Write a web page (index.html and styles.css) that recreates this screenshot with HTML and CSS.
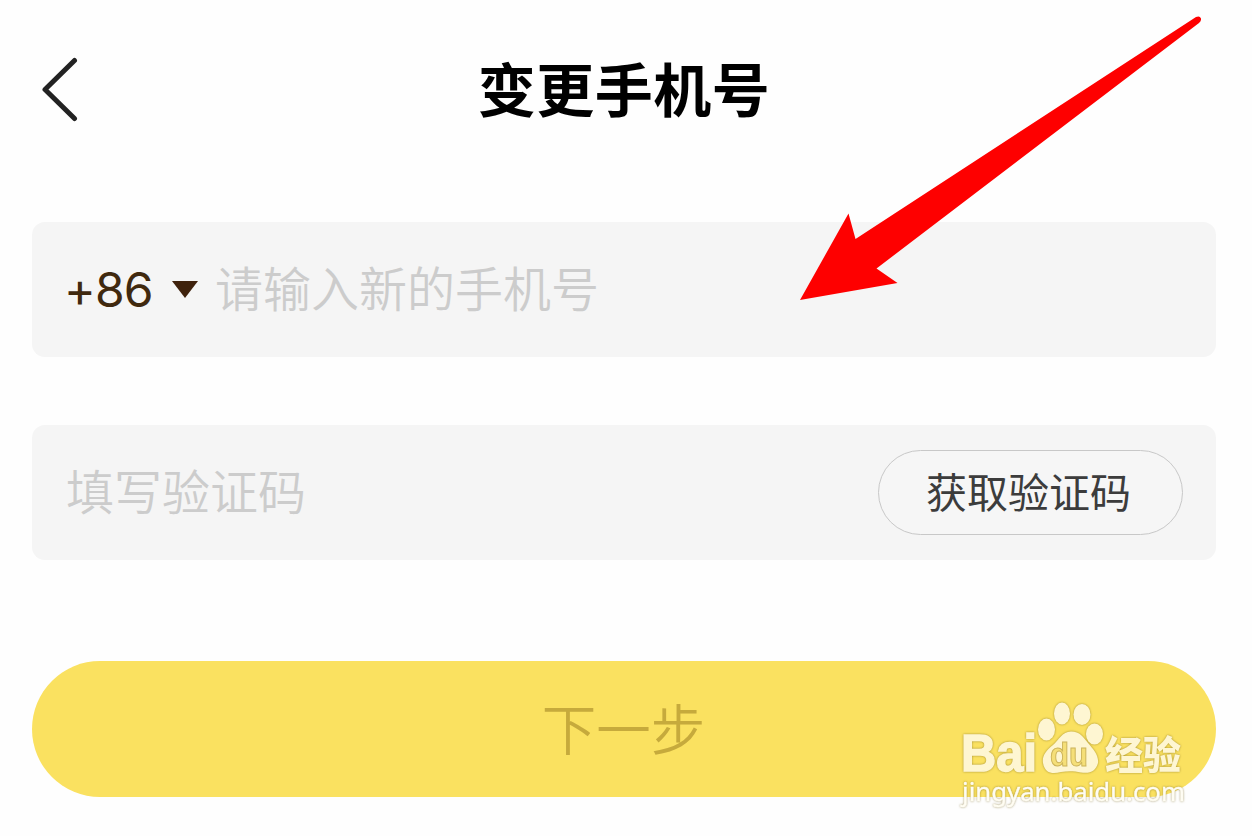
FILE: index.html
```html
<!DOCTYPE html>
<html lang="zh-CN">
<head>
  <meta charset="UTF-8" />
  <meta name="viewport" content="width=device-width, initial-scale=1.0" />
  <title>变更手机号</title>
  <link rel="stylesheet" href="styles.css">
</head>
<body>

  <header class="header">
    <svg class="back" width="40" height="66" viewBox="0 0 40 66">
      <path d="M34.500 3.500L5 32.500l29.500 29" />
    </svg>
    <h1 class="title">变更手机号</h1>
  </header>

  <main class="form">
    <div class="field">
      <span class="prefix">+86</span>
      <svg class="caret" width="26" height="17" viewBox="0 0 26 17">
        <path d="M0 0h26L13 17z" />
      </svg>
      <span class="placeholder">请输入新的手机号</span>
    </div>

    <div class="field">
      <span class="placeholder">填写验证码</span>
      <button class="get-code">获取验证码</button>
    </div>

    <button class="next">下一步</button>
  </main>

  <svg class="arrow" width="410" height="290" viewBox="0 0 410 290">
    <path d="M0 285L48.500 198.500L55.500 224L396 2Q400 0.500 401 3.500Q401.500 6 399 8L76.500 253.500L97.500 268Z" />
  </svg>

  <svg class="watermark" width="240" height="116" viewBox="950 700 240 116">
    <g class="logo">
      <text class="bai" x="961" y="771" textLength="76" lengthAdjust="spacingAndGlyphs">Bai</text>
      <ellipse cx="1046.500" cy="729.500" rx="8.500" ry="11" />
      <ellipse cx="1062" cy="713.500" rx="8" ry="11" />
      <ellipse cx="1082" cy="714.500" rx="8.500" ry="10.500" />
      <ellipse cx="1094.500" cy="734" rx="8.500" ry="10.500" />
      <path d="M1071 731.500C1062 731.500 1059 740 1053 745C1045 751 1042 757 1043 763C1045 774 1053 774 1061 772C1068 771 1074 771 1081 772.500C1090 774 1096 771 1098 763C1099 755 1093 749 1088 743C1083 737 1080 731.500 1071 731.500Z" />
      <text class="jingyan" x="1105" y="769" textLength="76" lengthAdjust="spacingAndGlyphs">经验</text>
    </g>
    <text class="du" x="1050" y="766" textLength="38" lengthAdjust="spacingAndGlyphs">du</text>
    <text class="url" x="962" y="801" textLength="223" lengthAdjust="spacingAndGlyphs">jingyan.baidu.com</text>
  </svg>

</body>
</html>
```
FILE: styles.css
```css
html, body {
  margin: 0;
  padding: 0;
  height: 100%;
  overflow: hidden;
  background: #fefefe;
  font-family: "Liberation Sans", "Noto Sans CJK SC", sans-serif;
}

.header {
  display: grid;
  grid-template-columns: 80px 1fr 80px;
  align-items: center;
  height: 178px;
  padding: 2px 44px 0 40px;
  box-sizing: border-box;
}

.back {
  fill: none;
  stroke: #222;
  stroke-width: 5;
  stroke-linecap: round;
  stroke-linejoin: round;
}

.title {
  margin: 0;
  padding-bottom: 7px;
  text-align: center;
  font-family: "Noto Sans CJK SC", sans-serif;
  font-size: 58px;
  font-weight: 700;
  letter-spacing: 0.5px;
  line-height: 80px;
  color: #000;
}

.form {
  display: flex;
  flex-direction: column;
  padding: 44px 36px 0 32px;
}

.field {
  display: flex;
  align-items: center;
  height: 135px;
  margin-bottom: 68px;
  padding: 0 33px 0 34px;
  box-sizing: border-box;
  border-radius: 13px;
  background: #f5f5f5;
}

.prefix {
  width: 108px;
  margin-left: -2px;
  font-family: Inter, sans-serif;
  font-size: 48px;
  letter-spacing: -0.8px;
  color: #40290f;
}

.caret {
  margin-right: 17px;
  fill: #3f220c;
}

.placeholder {
  padding-bottom: 7px;
  font-family: "Noto Sans CJK SC", sans-serif;
  font-size: 48px;
  font-weight: 350;
  line-height: 70px;
  color: #ccc;
}

button {
  padding: 0;
  border: 0;
  font-family: "Noto Sans CJK SC", sans-serif;
}

.get-code {
  width: 305px;
  height: 85px;
  margin-left: auto;
  padding: 0 4px 6px 0;
  border: 1.5px solid #c8c8c8;
  border-radius: 43px;
  background: #f6f6f6;
  font-size: 41px;
  color: #3c3c3c;
}

.next {
  height: 136px;
  margin-top: 33px;
  padding: 0 1px 6px 0;
  border-radius: 68px;
  background: #fae160;
  font-size: 54.5px;
  font-weight: 350;
  color: #c6aa3c;
}

.arrow {
  position: absolute;
  left: 800px;
  top: 15px;
  fill: #fe0000;
}

.watermark {
  position: absolute;
  left: 950px;
  top: 700px;
  filter: drop-shadow(0 0 1px rgba(110, 90, 20, 0.6));
}

.logo {
  fill: #fef6d2;
}

.bai {
  font-family: "Liberation Sans", sans-serif;
  font-size: 51px;
  font-weight: 700;
  stroke: #fef6d2;
  stroke-width: 1.5;
}

.du {
  font-family: "Liberation Sans", sans-serif;
  font-size: 33px;
  font-weight: 700;
  fill: #f5df78;
  stroke: #cdb45a;
  stroke-width: 1;
}

.jingyan {
  font-family: "Noto Sans CJK SC", sans-serif;
  font-size: 39px;
  font-weight: 900;
}

.url {
  font-family: "Noto Sans", sans-serif;
  font-size: 26px;
  fill: #fffdf3;
  stroke: #fffdf3;
  stroke-width: 0.4;
}
```
